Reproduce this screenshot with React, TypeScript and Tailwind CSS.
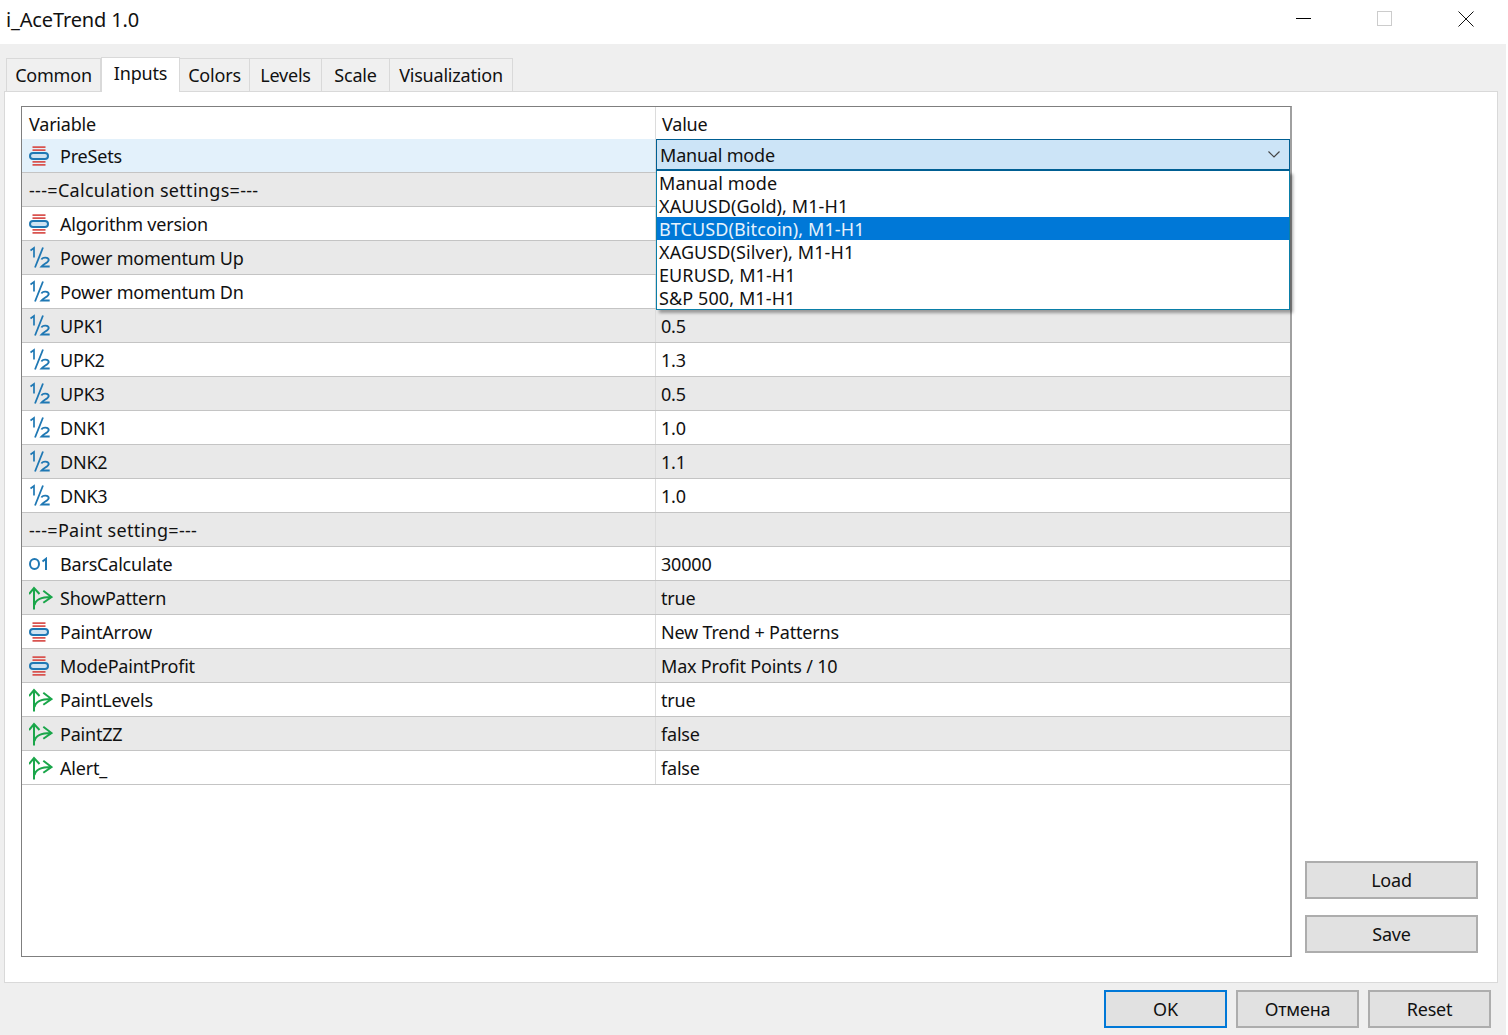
import React from 'react'

type Kind = 'enum' | 'frac' | 'int' | 'bool' | 'none'

const rows: { icon: Kind; name: string; value: string }[] = [
  { icon: 'none', name: '---=Calculation settings=---', value: '' },
  { icon: 'enum', name: 'Algorithm version', value: '' },
  { icon: 'frac', name: 'Power momentum Up', value: '' },
  { icon: 'frac', name: 'Power momentum Dn', value: '' },
  { icon: 'frac', name: 'UPK1', value: '0.5' },
  { icon: 'frac', name: 'UPK2', value: '1.3' },
  { icon: 'frac', name: 'UPK3', value: '0.5' },
  { icon: 'frac', name: 'DNK1', value: '1.0' },
  { icon: 'frac', name: 'DNK2', value: '1.1' },
  { icon: 'frac', name: 'DNK3', value: '1.0' },
  { icon: 'none', name: '---=Paint setting=---', value: '' },
  { icon: 'int', name: 'BarsCalculate', value: '30000' },
  { icon: 'bool', name: 'ShowPattern', value: 'true' },
  { icon: 'enum', name: 'PaintArrow', value: 'New Trend + Patterns' },
  { icon: 'enum', name: 'ModePaintProfit', value: 'Max Profit Points / 10' },
  { icon: 'bool', name: 'PaintLevels', value: 'true' },
  { icon: 'bool', name: 'PaintZZ', value: 'false' },
  { icon: 'bool', name: 'Alert_', value: 'false' },
]

const options = [
  'Manual mode',
  'XAUUSD(Gold), M1-H1',
  'BTCUSD(Bitcoin), M1-H1',
  'XAGUSD(Silver), M1-H1',
  'EURUSD, M1-H1',
  'S&P 500, M1-H1',
]

function TypeIcon({ kind }: { kind: Kind }) {
  if (kind === 'enum')
    return (
      <svg width="20" height="22" viewBox="0 0 20 22" fill="none">
        <path d="M3.5 2.2h13M3.5 5.2h13M3.5 16.8h13M3.5 19.8h13" stroke="#d9534f" strokeWidth="1.7" />
        <rect x="1" y="8" width="18" height="6" rx="3" stroke="#1f78b4" strokeWidth="2" fill="#cfe3f2" />
      </svg>
    )
  if (kind === 'frac')
    return (
      <svg width="22" height="24" viewBox="0 0 22 24" fill="none" stroke="#1f78b4">
        <path d="M1.5 4.5L5 2v9.5" strokeWidth="1.7" />
        <path d="M14 1.5L6 21.5" strokeWidth="1.8" />
        <path d="M12.5 13.5c1-2.6 7.2-2.6 7.2.5 0 2.5-4.7 3.6-7.2 6.5h8.2" strokeWidth="1.9" />
      </svg>
    )
  if (kind === 'int')
    return (
      <svg width="20" height="14" viewBox="0 0 20 14" fill="none" stroke="#1f78b4" strokeWidth="2">
        <ellipse cx="5.5" cy="7" rx="4.5" ry="5" />
        <path d="M13.5 4.5L17 1.8V13" />
      </svg>
    )
  if (kind === 'bool')
    return (
      <svg width="24" height="24" viewBox="0 0 24 24" fill="none" stroke="#1aa64a" strokeWidth="2">
        <path d="M5 23.5V2M0 8l5-6 5.5 6" />
        <path d="M5.5 19c1-5 6-8 16.5-8M14.3 4.7L22.5 11l-8.2 5.8" />
      </svg>
    )
  return null
}

function DlgButton({ label, wide, focus }: { label: string; wide?: boolean; focus?: boolean }) {
  return (
    <button
      className={
        'h-[38px] flex items-center justify-center bg-[#e1e1e1] text-[#111] ' +
        (wide ? 'w-[173px] ' : 'w-[123px] ') +
        (focus ? 'border-2 border-[#0078d7]' : 'border-2 border-[#adadad]')
      }
    >
      {label}
    </button>
  )
}

export default function App() {
  return (
    <div className="w-[1508px] h-[1035px] bg-white overflow-hidden font-['Noto_Sans','Open_Sans',sans-serif] text-[18px] tracking-[-0.2px] leading-none text-[#111]">
      <div className="w-[1506px] h-[1035px] flex flex-col bg-[#efefef]">
        {/* title bar */}
        <div className="h-[44px] bg-white flex items-center justify-between shrink-0">
          <span className="pl-[6px] pb-[5px] text-[20px] tracking-[-0.15px]">i_AceTrend 1.0</span>
          <div className="flex items-center gap-[66px] pr-[32px] pb-[7px]">
            <div className="w-[15px] h-px bg-black" />
            <div className="w-[15px] h-[15px] border border-[#ccc]" />
            <svg width="16" height="16" viewBox="0 0 16 16" stroke="#111" strokeWidth="1">
              <path d="M0.5 0.5l15 15M15.5 0.5l-15 15" />
            </svg>
          </div>
        </div>

        {/* tabs */}
        <div className="h-[47px] pl-[6px] flex items-end shrink-0">
          <div className="h-[33px] w-[95px] flex items-center justify-center bg-[#f0f0f0] border border-b-0 border-[#d9d9d9]">Common</div>
          <div className="h-[35px] w-[79px] flex items-center justify-center pb-[4px] bg-white border border-b-0 border-[#d9d9d9] relative top-px z-10">Inputs</div>
          <div className="h-[33px] w-[70px] flex items-center justify-center bg-[#f0f0f0] border border-b-0 border-l-0 border-[#d9d9d9]">Colors</div>
          <div className="h-[33px] w-[72px] flex items-center justify-center bg-[#f0f0f0] border border-b-0 border-l-0 border-[#d9d9d9]">Levels</div>
          <div className="h-[33px] w-[68px] flex items-center justify-center bg-[#f0f0f0] border border-b-0 border-l-0 border-[#d9d9d9]">Scale</div>
          <div className="h-[33px] w-[123px] flex items-center justify-center bg-[#f0f0f0] border border-b-0 border-l-0 border-[#d9d9d9]">Visualization</div>
        </div>

        {/* panel */}
        <div className="h-[892px] w-[1494px] ml-[4px] bg-white border border-[#d9d9d9] pl-[16px] pt-[14px] flex shrink-0">
          <div className="w-[1271px] h-[851px] border border-[#7f7f7f] border-r-2 border-r-[#a0a0a0] relative shrink-0">
            <div className="h-[32px] flex items-center">
              <div className="w-[634px] pl-[7px] pt-[2px] border-r border-[#dcdcdc] h-full flex items-center">Variable</div>
              <div className="pl-[6px] pt-[2px]">Value</div>
            </div>

            <div className="h-[34px] flex border-b border-[#c4c4c4] bg-[#e3f1fb]">
              <div className="w-[634px] flex items-center border-r border-[#dcdcdc]">
                <div className="w-[38px] pl-[7px] shrink-0 flex items-center"><TypeIcon kind="enum" /></div>
                <span>PreSets</span>
              </div>
            </div>

            {rows.map((r, i) => (
              <div key={r.name} className={'h-[34px] flex border-b border-[#c4c4c4] ' + (i % 2 === 0 ? 'bg-[#e9e9e9]' : 'bg-white')}>
                <div className="w-[634px] flex items-center border-r border-[#dcdcdc] shrink-0">
                  {r.icon === 'none' ? (
                    <span className="pl-[7px] tracking-[0.3px]">{r.name}</span>
                  ) : (
                    <>
                      <div className="w-[38px] pl-[7px] shrink-0 flex items-center"><TypeIcon kind={r.icon} /></div>
                      <span>{r.name}</span>
                    </>
                  )}
                </div>
                <div className="flex items-center pl-[5px]">{r.value}</div>
              </div>
            ))}

            {/* open combo */}
            <div className="absolute left-[634px] top-[32px] w-[634px] h-[32px] bg-[#cce4f7] border border-b-2 border-[#005f93] flex items-center justify-between pl-[3px] pr-[9px]">
              <span>Manual mode</span>
              <svg width="12" height="7" viewBox="0 0 12 7" fill="none" stroke="#444" strokeWidth="1.2">
                <path d="M0.5 0.5L6 6l5.5-5.5" />
              </svg>
            </div>
            <div className="absolute left-[634px] top-[64px] w-[634px] h-[139px] bg-white border border-t-0 border-[#0a7fa8] shadow-[3px_3px_3px_rgba(0,0,0,0.35)] tracking-[0.1px]">
              {options.map((o, i) => (
                <div key={o} className={'h-[23px] pl-[2px] flex items-center ' + (i === 2 ? 'bg-[#0078d7] text-[#e6f2fc]' : '')}>
                  {o}
                </div>
              ))}
            </div>
          </div>

          <div className="ml-[13px] pt-[755px] flex flex-col gap-[16px]">
            <DlgButton label="Load" wide />
            <DlgButton label="Save" wide />
          </div>
        </div>

        {/* footer */}
        <div className="flex justify-end gap-[9px] pr-[15px] pt-[7px]">
          <DlgButton label="OK" focus />
          <DlgButton label="Отмена" />
          <DlgButton label="Reset" />
        </div>
      </div>
    </div>
  )
}
